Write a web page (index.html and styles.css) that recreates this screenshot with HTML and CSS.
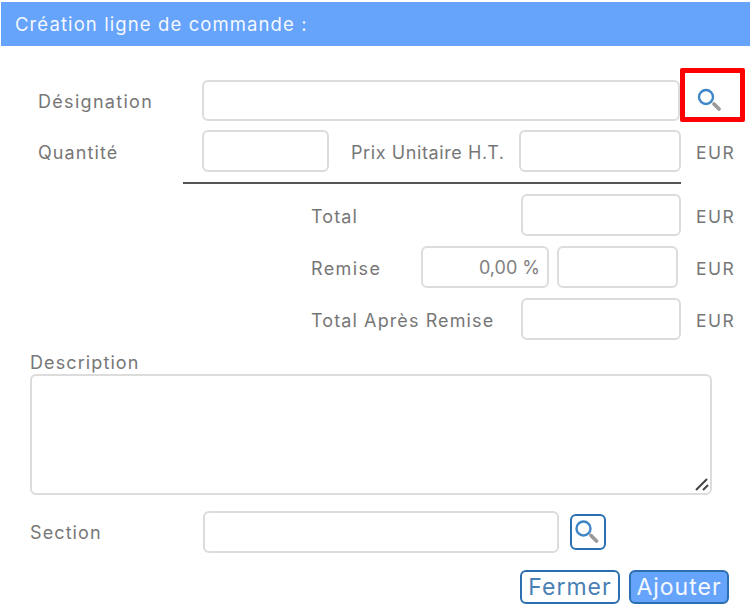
FILE: index.html
```html
<!DOCTYPE html>
<html lang="fr">
<head>
    <meta charset="UTF-8">
    <title>Création ligne de commande</title>
    <link rel="stylesheet" href="styles.css">
</head>
<body>
    <div class="dialog">
        <div class="dialog-title">Création ligne de commande :</div>

        <div class="row row-designation">
            <label class="label label-main label-designation">Désignation</label>
            <input type="text" class="field field-designation">
            <div class="search-highlight">
                <svg class="search-icon" width="26" height="26" viewBox="0 0 26 26">
                    <circle cx="9" cy="9" r="7" fill="none" stroke="#3f86c6" stroke-width="2.4"/>
                    <path d="M17 16 L22 21" stroke="#9a9a9a" stroke-width="3.8" stroke-linecap="round"/>
                </svg>
            </div>
        </div>

        <div class="row row-quantity">
            <label class="label label-main">Quantité</label>
            <input type="text" class="field field-quantity">
            <label class="label label-price">Prix Unitaire H.T.</label>
            <input type="text" class="field field-price">
            <span class="currency">EUR</span>
        </div>

        <div class="separator"></div>

        <div class="row row-total">
            <label class="label label-total">Total</label>
            <input type="text" class="field field-amount">
            <span class="currency">EUR</span>
        </div>

        <div class="row row-total">
            <label class="label label-discount">Remise</label>
            <input type="text" class="field field-percent" value="0,00 %">
            <input type="text" class="field field-discount">
            <span class="currency currency-discount">EUR</span>
        </div>

        <div class="row row-total">
            <label class="label label-total">Total Après Remise</label>
            <input type="text" class="field field-amount">
            <span class="currency">EUR</span>
        </div>

        <div class="description">
            <label class="label description-label">Description</label>
            <div class="textarea-wrap">
                <textarea class="field field-description"></textarea>
                <svg class="grip" width="16" height="16" viewBox="0 0 16 16">
                    <path d="M2 14 L13 3 M9 14 L14 9" stroke="#444" stroke-width="2" fill="none"/>
                </svg>
            </div>
        </div>

        <div class="row row-section">
            <label class="label label-section">Section</label>
            <input type="text" class="field field-section">
            <button class="search-button">
                <svg width="26" height="26" viewBox="0 0 26 26">
                    <circle cx="8.5" cy="9.5" r="7" fill="none" stroke="#3f86c6" stroke-width="2.4"/>
                    <path d="M16 16.5 L21.5 22" stroke="#9a9a9a" stroke-width="3.8" stroke-linecap="round"/>
                </svg>
            </button>
        </div>

        <div class="actions">
            <button class="button button-outline">Fermer</button>
            <button class="button button-primary">Ajouter</button>
        </div>
    </div>
</body>
</html>
```

FILE: styles.css
```css
* { margin: 0; padding: 0; box-sizing: border-box; }

body {
    font-family: "Inter", "Liberation Sans", sans-serif;
    background-color: #fff;
    color: #6b6b6b;
    width: 754px;
    height: 616px;
    overflow: hidden;
}

.dialog {
    padding-top: 2px;
}

.dialog-title {
    margin: 0 4px 0 1px;
    height: 44px;
    line-height: 45px;
    padding-left: 14px;
    background-color: #66a3fb;
    color: #f4f8ff;
    font-size: 18.5px;
    letter-spacing: 1.1px;
}

.row {
    display: flex;
    align-items: center;
}

.label {
    padding-top: 3px;
    font-size: 18px;
    letter-spacing: 1.1px;
    color: #777;
    white-space: nowrap;
}

.field {
    display: block;
    height: 42px;
    border: 2px solid #dcdcdc;
    border-radius: 6px;
    background: #fff;
    font-family: inherit;
    font-size: 18px;
    color: #808080;
    outline: none;
}

.currency {
    margin-left: 15px;
    padding-top: 3px;
    font-size: 17.5px;
    letter-spacing: 1.5px;
    color: #777;
}

.currency-discount {
    margin-left: 18px;
}

/* first two rows */
.row-designation {
    position: relative;
    margin-top: 34px;
    padding-left: 38px;
}

.label-main {
    width: 164px;
}

.label-designation {
    padding-top: 1px;
    letter-spacing: 1.3px;
}

.field-designation {
    width: 478px;
    height: 41px;
}

.search-highlight {
    position: absolute;
    left: 680px;
    top: -12px;
    width: 65px;
    height: 54px;
    border: 5px solid #f00;
    border-radius: 2px;
}

.search-icon {
    position: absolute;
    left: 12px;
    top: 15px;
}

.row-quantity {
    margin-top: 9px;
    padding-left: 38px;
}

.field-quantity {
    width: 127px;
}

.label-price {
    width: 190px;
    padding-left: 22px;
    letter-spacing: 0.6px;
}

.field-price {
    width: 162px;
}

.separator {
    margin: 10px 0 0 183px;
    width: 498px;
    border-top: 2px solid #555;
}

/* totals */
.row-total {
    margin-top: 10px;
    padding-left: 311px;
}

.label-total {
    width: 210px;
}

.field-amount {
    width: 160px;
}

.label-discount {
    width: 110px;
    letter-spacing: 1.4px;
}

.field-percent {
    width: 128px;
    padding-right: 7px;
    text-align: right;
}

.field-discount {
    width: 121px;
    margin-left: 8px;
}

/* description */
.description {
    margin: 12px 0 0 30px;
}

.description-label {
    display: block;
    padding-top: 0;
    line-height: 22px;
    height: 22px;
}

.textarea-wrap {
    position: relative;
    width: 682px;
}

.field-description {
    width: 100%;
    height: 121px;
    resize: none;
}

.grip {
    position: absolute;
    right: 2px;
    bottom: 3px;
}

/* section */
.row-section {
    margin-top: 16px;
    padding-left: 30px;
}

.label-section {
    width: 173px;
    padding-top: 1px;
}

.field-section {
    width: 356px;
}

.search-button {
    width: 36px;
    height: 36px;
    margin-left: 11px;
    border: 2px solid #2b6fb0;
    border-radius: 6px;
    background: #fff;
    display: flex;
    align-items: center;
    justify-content: center;
}

/* buttons */
.actions {
    display: flex;
    justify-content: flex-end;
    gap: 9px;
    margin: 17px 25px 0 0;
}

.button {
    width: 100px;
    height: 34px;
    border: 2px solid #2b6fb0;
    border-radius: 6px;
    font-family: inherit;
    font-size: 23px;
    letter-spacing: 1px;
}

.button-outline {
    background: #fff;
    color: #4a7fb5;
}

.button-primary {
    background: #66a3fb;
    color: #f4f8ff;
}
```
